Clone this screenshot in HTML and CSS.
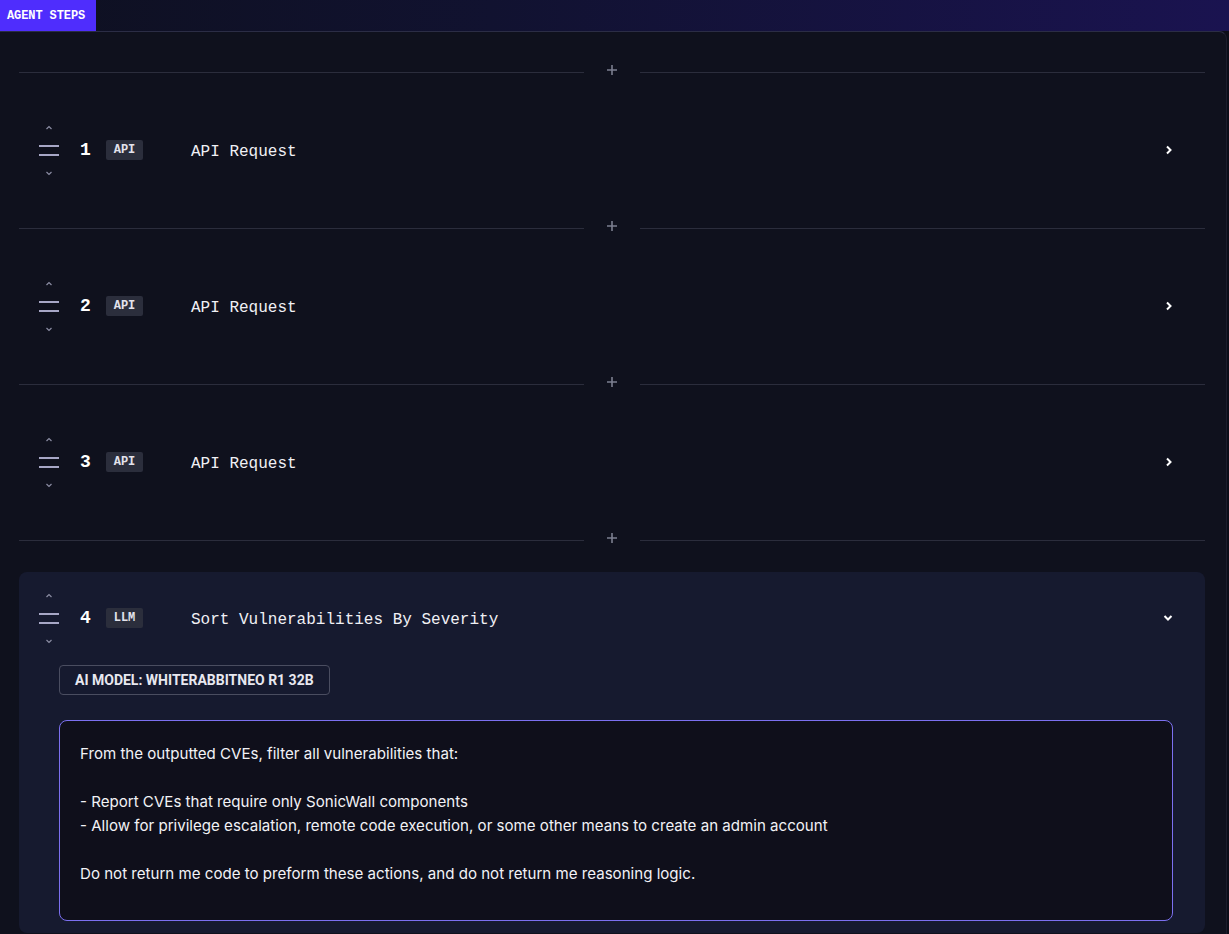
FILE: index.html
```html
<!DOCTYPE html>
<html>
<head>
<meta charset="utf-8">
<link rel="stylesheet" href="styles.css">
</head>
<body>
<div class="topbar"><span class="tab">AGENT STEPS</span></div>
<div class="panel">
  <div class="steps">
    <div class="divider"><span class="line"></span><svg class="plus" width="12" height="12" viewBox="0 0 12 12"><path d="M6 1v10M1 6h10" stroke="#7c7f90" stroke-width="1.6"/></svg><span class="line"></span></div>
    <div class="step">
      <div class="step-head">
        <div class="handle">
          <svg class="caret" width="8" height="5" viewBox="0 0 8 5"><path d="M1.5 4L4 1.5 6.5 4" fill="none" stroke="#8b8da3" stroke-width="1.2"/></svg>
          <svg class="burger" width="20" height="11" viewBox="0 0 20 11"><path d="M0 1h20M0 10h20" stroke="#a7a7c6" stroke-width="2"/></svg>
          <svg class="caret" width="8" height="5" viewBox="0 0 8 5"><path d="M1.5 1L4 3.5 6.5 1" fill="none" stroke="#8b8da3" stroke-width="1.2"/></svg>
        </div>
        <span class="num">1</span>
        <span class="badge">API</span>
        <span class="title">API Request</span>
        <svg class="chev" width="8" height="10" viewBox="0 0 8 10"><path d="M2 1.5L5.5 5 2 8.5" fill="none" stroke="#ffffff" stroke-width="2"/></svg>
      </div>
    </div>
    <div class="divider"><span class="line"></span><svg class="plus" width="12" height="12" viewBox="0 0 12 12"><path d="M6 1v10M1 6h10" stroke="#7c7f90" stroke-width="1.6"/></svg><span class="line"></span></div>
    <div class="step">
      <div class="step-head">
        <div class="handle">
          <svg class="caret" width="8" height="5" viewBox="0 0 8 5"><path d="M1.5 4L4 1.5 6.5 4" fill="none" stroke="#8b8da3" stroke-width="1.2"/></svg>
          <svg class="burger" width="20" height="11" viewBox="0 0 20 11"><path d="M0 1h20M0 10h20" stroke="#a7a7c6" stroke-width="2"/></svg>
          <svg class="caret" width="8" height="5" viewBox="0 0 8 5"><path d="M1.5 1L4 3.5 6.5 1" fill="none" stroke="#8b8da3" stroke-width="1.2"/></svg>
        </div>
        <span class="num">2</span>
        <span class="badge">API</span>
        <span class="title">API Request</span>
        <svg class="chev" width="8" height="10" viewBox="0 0 8 10"><path d="M2 1.5L5.5 5 2 8.5" fill="none" stroke="#ffffff" stroke-width="2"/></svg>
      </div>
    </div>
    <div class="divider"><span class="line"></span><svg class="plus" width="12" height="12" viewBox="0 0 12 12"><path d="M6 1v10M1 6h10" stroke="#7c7f90" stroke-width="1.6"/></svg><span class="line"></span></div>
    <div class="step">
      <div class="step-head">
        <div class="handle">
          <svg class="caret" width="8" height="5" viewBox="0 0 8 5"><path d="M1.5 4L4 1.5 6.5 4" fill="none" stroke="#8b8da3" stroke-width="1.2"/></svg>
          <svg class="burger" width="20" height="11" viewBox="0 0 20 11"><path d="M0 1h20M0 10h20" stroke="#a7a7c6" stroke-width="2"/></svg>
          <svg class="caret" width="8" height="5" viewBox="0 0 8 5"><path d="M1.5 1L4 3.5 6.5 1" fill="none" stroke="#8b8da3" stroke-width="1.2"/></svg>
        </div>
        <span class="num">3</span>
        <span class="badge">API</span>
        <span class="title">API Request</span>
        <svg class="chev" width="8" height="10" viewBox="0 0 8 10"><path d="M2 1.5L5.5 5 2 8.5" fill="none" stroke="#ffffff" stroke-width="2"/></svg>
      </div>
    </div>
    <div class="divider"><span class="line"></span><svg class="plus" width="12" height="12" viewBox="0 0 12 12"><path d="M6 1v10M1 6h10" stroke="#7c7f90" stroke-width="1.6"/></svg><span class="line"></span></div>
    <div class="step open">
      <div class="step-head">
        <div class="handle">
          <svg class="caret" width="8" height="5" viewBox="0 0 8 5"><path d="M1.5 4L4 1.5 6.5 4" fill="none" stroke="#8b8da3" stroke-width="1.2"/></svg>
          <svg class="burger" width="20" height="11" viewBox="0 0 20 11"><path d="M0 1h20M0 10h20" stroke="#a7a7c6" stroke-width="2"/></svg>
          <svg class="caret" width="8" height="5" viewBox="0 0 8 5"><path d="M1.5 1L4 3.5 6.5 1" fill="none" stroke="#8b8da3" stroke-width="1.2"/></svg>
        </div>
        <span class="num">4</span>
        <span class="badge">LLM</span>
        <span class="title">Sort Vulnerabilities By Severity</span>
        <svg class="chev" width="10" height="8" viewBox="0 0 10 8"><path d="M1.5 2L5 5.5 8.5 2" fill="none" stroke="#ffffff" stroke-width="2"/></svg>
      </div>
      <div class="step-body">
        <span class="model">AI MODEL: WHITERABBITNEO R1 32B</span>
        <div class="prompt">
          <p>From the outputted CVEs, filter all vulnerabilities that:</p>
          <p>&nbsp;</p>
          <p>- Report CVEs that require only SonicWall components</p>
          <p>- Allow for privilege escalation, remote code execution, or some other means to create an admin account</p>
          <p>&nbsp;</p>
          <p>Do not return me code to preform these actions, and do not return me reasoning logic.</p>
        </div>
      </div>
    </div>
  </div>
</div>
</body>
</html>
```
FILE: styles.css
```css
html, body {
  margin: 0;
  padding: 0;
  background: #0c0d18;
  height: 934px;
  overflow: hidden;
}

.topbar {
  height: 31px;
  display: flex;
  align-items: stretch;
  background: linear-gradient(90deg, #0e1020 0%, #111230 40%, #1a1350 100%);
}

.tab {
  background: #4f2dfd;
  color: #ffffff;
  font-family: "Liberation Mono", monospace;
  font-weight: 700;
  font-size: 12px;
  width: 96px;
  box-sizing: border-box;
  padding-left: 7px;
  display: flex;
  align-items: center;
  letter-spacing: -0.1px;
}

.panel {
  width: 1227px;
  box-sizing: border-box;
  background: #0f111d;
  border-top: 1px solid #2b2d45;
  border-right: 1px solid #1b1d2c;
  border-top-right-radius: 8px;
  padding: 24px 21px 0 19px;
  height: 903px;
}

.steps {
  display: flex;
  flex-direction: column;
}

.divider {
  height: 32px;
  display: flex;
  align-items: center;
  gap: 22px;
}

.divider .line {
  flex: 1;
  height: 1px;
  background: #2b2d3c;
}

.plus {
  flex: none;
  margin-top: -4px;
}

.step {
  padding: 16px 0;
}

.step-head {
  height: 92px;
  box-sizing: border-box;
  padding: 4px 32px 0 20px;
  display: flex;
  align-items: center;
  border-radius: 8px;
}

.step.open {
  margin-top: 16px;
  padding: 0;
  background: #161a2f;
  border-radius: 8px;
}

.handle {
  width: 20px;
  display: flex;
  flex-direction: column;
  align-items: center;
  gap: 15px;
  margin-top: -3px;
}

.caret { display: block; }
.burger { display: block; }

.num {
  margin-left: 21px;
  font-family: "Liberation Mono", monospace;
  font-weight: 700;
  font-size: 18px;
  color: #ffffff;
  width: 26px;
  margin-top: -5px;
}

.badge {
  background: #2b2e3c;
  color: #e3e3ec;
  font-family: "Liberation Mono", monospace;
  font-weight: 700;
  font-size: 12px;
  height: 20px;
  width: 37px;
  display: flex;
  align-items: center;
  justify-content: center;
  border-radius: 2px;
  margin-top: -4px;
}

.title {
  margin-left: 48px;
  font-family: "Liberation Mono", monospace;
  font-size: 16px;
  color: #f0f0f4;
  flex: 1;
}

.chev {
  flex: none;
  margin-right: 0;
  margin-top: -4px;
}

.step-body {
  padding: 1px 32px 12px 40px;
}

.model {
  display: inline-flex;
  align-items: center;
  height: 30px;
  box-sizing: border-box;
  padding: 0 15px;
  border: 1px solid #4a4d60;
  border-radius: 4px;
  font-family: "Roboto", sans-serif;
  font-weight: 700;
  font-size: 14px;
  color: #e8e8f0;
}

.prompt {
  margin-top: 25px;
  height: 201px;
  box-sizing: border-box;
  border: 1px solid #7c70f0;
  border-radius: 8px;
  background: #0f0f1b;
  padding: 21px 20px 20px;
  font-family: "Inter", sans-serif;
  font-size: 15.1px;
  line-height: 24px;
  color: #f2f2f6;
}

.prompt p {
  margin: 0;
}
```
